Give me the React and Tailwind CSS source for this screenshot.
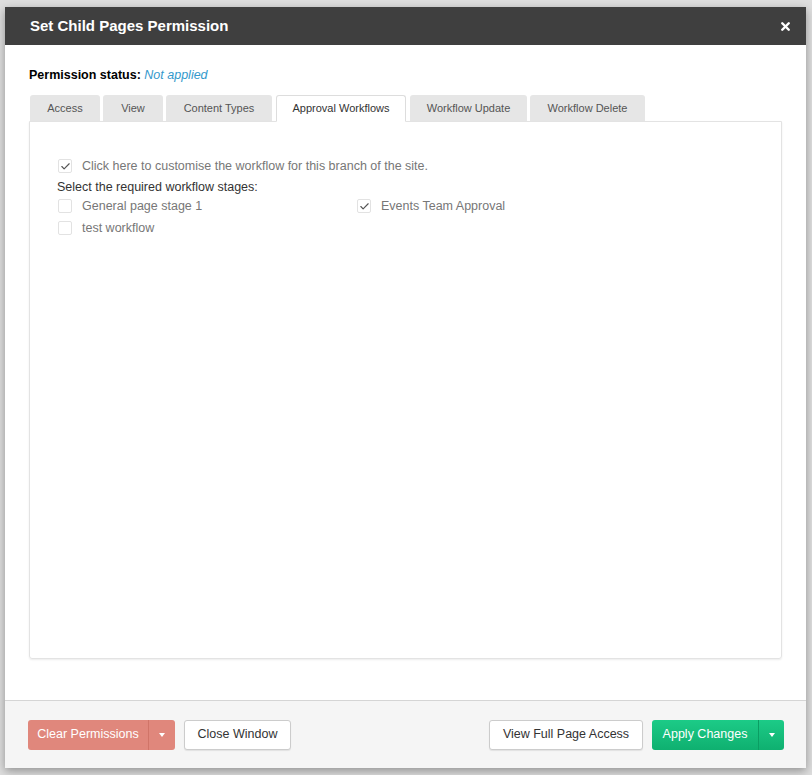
import { X, Check } from 'lucide-react'

const tabs = ['Access', 'View', 'Content Types', 'Approval Workflows', 'Workflow Update', 'Workflow Delete']
const tabWidths = [70, 60, 106, 130, 117, 115]

function CheckRow({ checked, label }) {
  return (
    <label className="flex items-center gap-[10px] h-[22px] text-[12.5px] text-[#777]">
      <span className="w-[14px] h-[14px] border border-[#e2e2e2] rounded-[2px] bg-white flex items-center justify-center">
        {checked && <Check size={11} strokeWidth={2.5} className="text-[#555]" />}
      </span>
      {label}
    </label>
  )
}

function Caret() {
  return <span className="w-0 h-0 border-l-[3.5px] border-r-[3.5px] border-t-[4px] border-l-transparent border-r-transparent border-t-white" />
}

export default function App() {
  return (
    <div className="min-h-[775px] bg-[#dedede] pt-[7px] pl-[5px] pr-[6px] pb-[7px] font-['Liberation_Sans',Arial,sans-serif]">
      <div className="bg-white shadow-[0_3px_9px_rgba(0,0,0,0.35)] flex flex-col h-[761px]">
        {/* Header */}
        <div className="bg-[#3f3f3f] h-[38px] flex items-center justify-between pl-[25px] pr-[14px]">
          <h1 className="text-white text-[15px] font-bold">Set Child Pages Permission</h1>
          <X size={13} strokeWidth={4.5} className="text-white" />
        </div>

        {/* Body */}
        <div className="flex-1 flex flex-col px-[24px] pt-[22px] pb-[41px]">
          <p className="text-[12.5px] text-black mb-[12px] leading-[16px]">
            <span className="font-bold">Permission status: </span>
            <span className="italic text-[#3399cc]">Not applied</span>
          </p>

          <div className="flex gap-[3px] pl-[1px] h-[26px]">
            {tabs.map((t, i) => (
              <div key={t}
                className={`flex items-center justify-center text-[11px] rounded-t-[3px] ${
                  i === 3
                    ? 'bg-white border border-[#ddd] border-b-white text-[#333] h-[27px] z-10 mx-[1px]'
                    : 'bg-[#e6e6e6] text-[#555]'
                }`}
                style={{ width: tabWidths[i] }}>
                {t}
              </div>
            ))}
          </div>

          <div className="flex-1 border border-[#e3e3e3] rounded-b-[3px] shadow-[0_1px_2px_rgba(0,0,0,0.08)] pt-[33px] pl-[28px] pr-[27px]">
            <CheckRow checked label="Click here to customise the workflow for this branch of the site." />
            <p className="text-[12.5px] text-[#333] mt-[2px] -ml-[1px] leading-[16px]">Select the required workflow stages:</p>
            <div className="grid grid-cols-[299px_1fr]">
              <CheckRow label="General page stage 1" />
              <CheckRow checked label="Events Team Approval" />
              <CheckRow label="test workflow" />
            </div>
          </div>
        </div>

        {/* Footer */}
        <div className="bg-[#f5f5f5] border-t border-[#d5d5d5] h-[68px] flex items-center justify-between pl-[23px] pr-[22px]">
          <div className="flex gap-[9px]">
            <div className="flex h-[30px] rounded-[3px] bg-[#e0877c] text-white text-[12.5px] overflow-hidden">
              <span className="w-[121px] flex items-center justify-center border-r border-[#d07468]">Clear Permissions</span>
              <span className="w-[26px] flex items-center justify-center"><Caret /></span>
            </div>
            <button className="h-[30px] w-[107px] rounded-[3px] bg-white border border-[#ccc] text-[#333] text-[12.5px] shadow-[0_1px_1px_rgba(0,0,0,0.08)]">Close Window</button>
          </div>
          <div className="flex gap-[9px]">
            <button className="h-[30px] w-[154px] rounded-[3px] bg-white border border-[#ccc] text-[#333] text-[12.5px] shadow-[0_1px_1px_rgba(0,0,0,0.08)]">View Full Page Access</button>
            <div className="flex h-[30px] rounded-[3px] bg-gradient-to-b from-[#1ccb87] to-[#0fb070] text-white text-[12.5px] overflow-hidden">
              <span className="w-[107px] flex items-center justify-center border-r border-[#0a9e63]">Apply Changes</span>
              <span className="w-[25px] flex items-center justify-center"><Caret /></span>
            </div>
          </div>
        </div>
      </div>
    </div>
  )
}
